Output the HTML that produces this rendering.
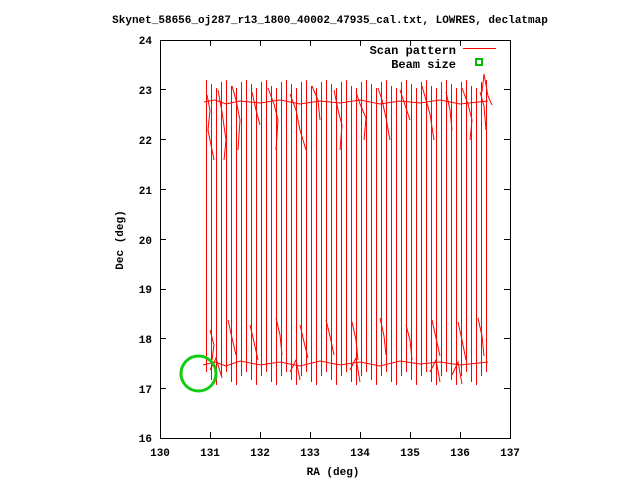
<!DOCTYPE html>
<html><head><style>
html,body{margin:0;padding:0;background:#fff;}
svg text{font-family:"Liberation Mono",monospace;font-weight:bold;font-size:11px;fill:#000;}
</style></head><body>
<svg width="640" height="480" xmlns="http://www.w3.org/2000/svg" shape-rendering="crispEdges">
<text x="330" y="23" text-anchor="middle">Skynet_58656_oj287_r13_1800_40002_47935_cal.txt, LOWRES, declatmap</text>
<rect x="160.5" y="40.5" width="350" height="398" fill="none" stroke="#000"/>
<g stroke="#000">
<path d="M210.5,438v-6M260.5,438v-6M310.5,438v-6M360.5,438v-6M410.5,438v-6M460.5,438v-6M210.5,40v6M260.5,40v6M310.5,40v6M360.5,40v6M410.5,40v6M460.5,40v6"/>
<path d="M160,89.5h6M160,139.5h6M160,189.5h6M160,239.5h6M160,289.5h6M160,338.5h6M160,388.5h6M510,89.5h-6M510,139.5h-6M510,189.5h-6M510,239.5h-6M510,289.5h-6M510,338.5h-6M510,388.5h-6"/>
</g>
<g text-anchor="end" style="font-size:12px">
<text x="152" y="44">24</text><text x="152" y="94">23</text><text x="152" y="144">22</text><text x="152" y="194">21</text><text x="152" y="244">20</text><text x="152" y="293">19</text><text x="152" y="343">18</text><text x="152" y="393">17</text><text x="152" y="442">16</text>
</g>
<g text-anchor="middle" style="font-size:12px">
<text x="160" y="456">130</text><text x="210" y="456">131</text><text x="260" y="456">132</text><text x="310" y="456">133</text><text x="360" y="456">134</text><text x="410" y="456">135</text><text x="460" y="456">136</text><text x="510" y="456">137</text>
<text x="333" y="475">RA (deg)</text>
<text transform="translate(123,240) rotate(-90)">Dec (deg)</text>
</g>
<g stroke="#f00" fill="none" stroke-width="1" shape-rendering="auto">
<path d="M206.5,80V372M211.5,84V380M216.5,88V385M221.5,82V376M226.5,80V372M231.5,86V382M236.5,88V385M241.5,82V376M246.5,80V372M251.5,84V380M256.5,88V385M261.5,82V376M266.5,80V372M271.5,86V382M276.5,88V385M281.5,82V376M286.5,80V372M291.5,84V380M296.5,88V385M301.5,82V376M306.5,80V372M311.5,86V382M316.5,88V385M321.5,82V376M326.5,80V372M331.5,84V380M336.5,88V385M341.5,82V376M346.5,80V372M351.5,86V382M356.5,88V385M361.5,82V376M366.5,80V372M371.5,84V380M376.5,88V385M381.5,82V376M386.5,80V372M391.5,86V382M396.5,88V385M401.5,82V376M406.5,80V372M411.5,84V380M416.5,88V385M421.5,82V376M426.5,80V372M431.5,86V382M436.5,88V385M441.5,82V376M446.5,80V372M451.5,84V380M456.5,88V385M461.5,82V376M466.5,80V372M471.5,86V382M476.5,88V385M481.5,82V376M486.5,80V372"/>
<path d="M207,95L210,110L208,130L212,150L214,160M218,90L222,112L226,140L224,160M232,86L236,100L240,120L238,150M252,92L256,110L260,125M268,88L274,104L278,120L276,150M290,94L296,110L300,130L306,150M312,86L318,100L320,120M334,90L338,110L342,125L340,150M356,92L360,104L366,118L364,140M378,88L382,100L386,118L390,140M400,90L406,108L410,120M422,86L426,100L430,114L434,140M446,92L450,110L452,130M462,88L468,104L472,120L470,140M480,92L484,106L486,130"/>
<path d="M204,102L215,100L226,104L240,101L260,103L280,100L300,104L320,101L340,103L360,100L380,104L400,101L420,103L440,100L460,104L488,101"/>
<path d="M210,330L214,345L212,360M228,320L232,338L236,355M250,325L254,342L258,360M276,318L280,335L282,355M300,325L304,342L308,358M326,320L330,336L334,355M352,322L356,340L358,360M380,318L384,336L386,355M406,325L410,340L412,360M432,320L436,338L440,356M458,322L462,340L466,360M478,318L482,336L484,356"/>
<path d="M203,365L215,362L226,366L240,361L260,365L280,362L300,366L320,361L340,365L360,362L380,366L400,361L420,364L440,362L460,365L488,362"/>
<path d="M210,370L216,358L222,378M290,372L296,360L300,380M350,370L356,358L360,382M430,372L436,360L440,382M452,375L458,362L462,384"/>
<path d="M482,92 L484,74 L488,96 L492,105"/>
</g>
<text x="456" y="54" text-anchor="end" style="font-size:12px">Scan pattern</text>
<text x="456" y="68" text-anchor="end" style="font-size:12px">Beam size</text>
<path d="M463,48.5h33" stroke="#f00"/>
<rect x="476" y="59" width="6" height="6" fill="none" stroke="#0b0" stroke-width="2"/>
<circle cx="198.5" cy="373.5" r="17.5" fill="none" stroke="#1c1" stroke-width="3" shape-rendering="auto"/>
</svg>
</body></html>
